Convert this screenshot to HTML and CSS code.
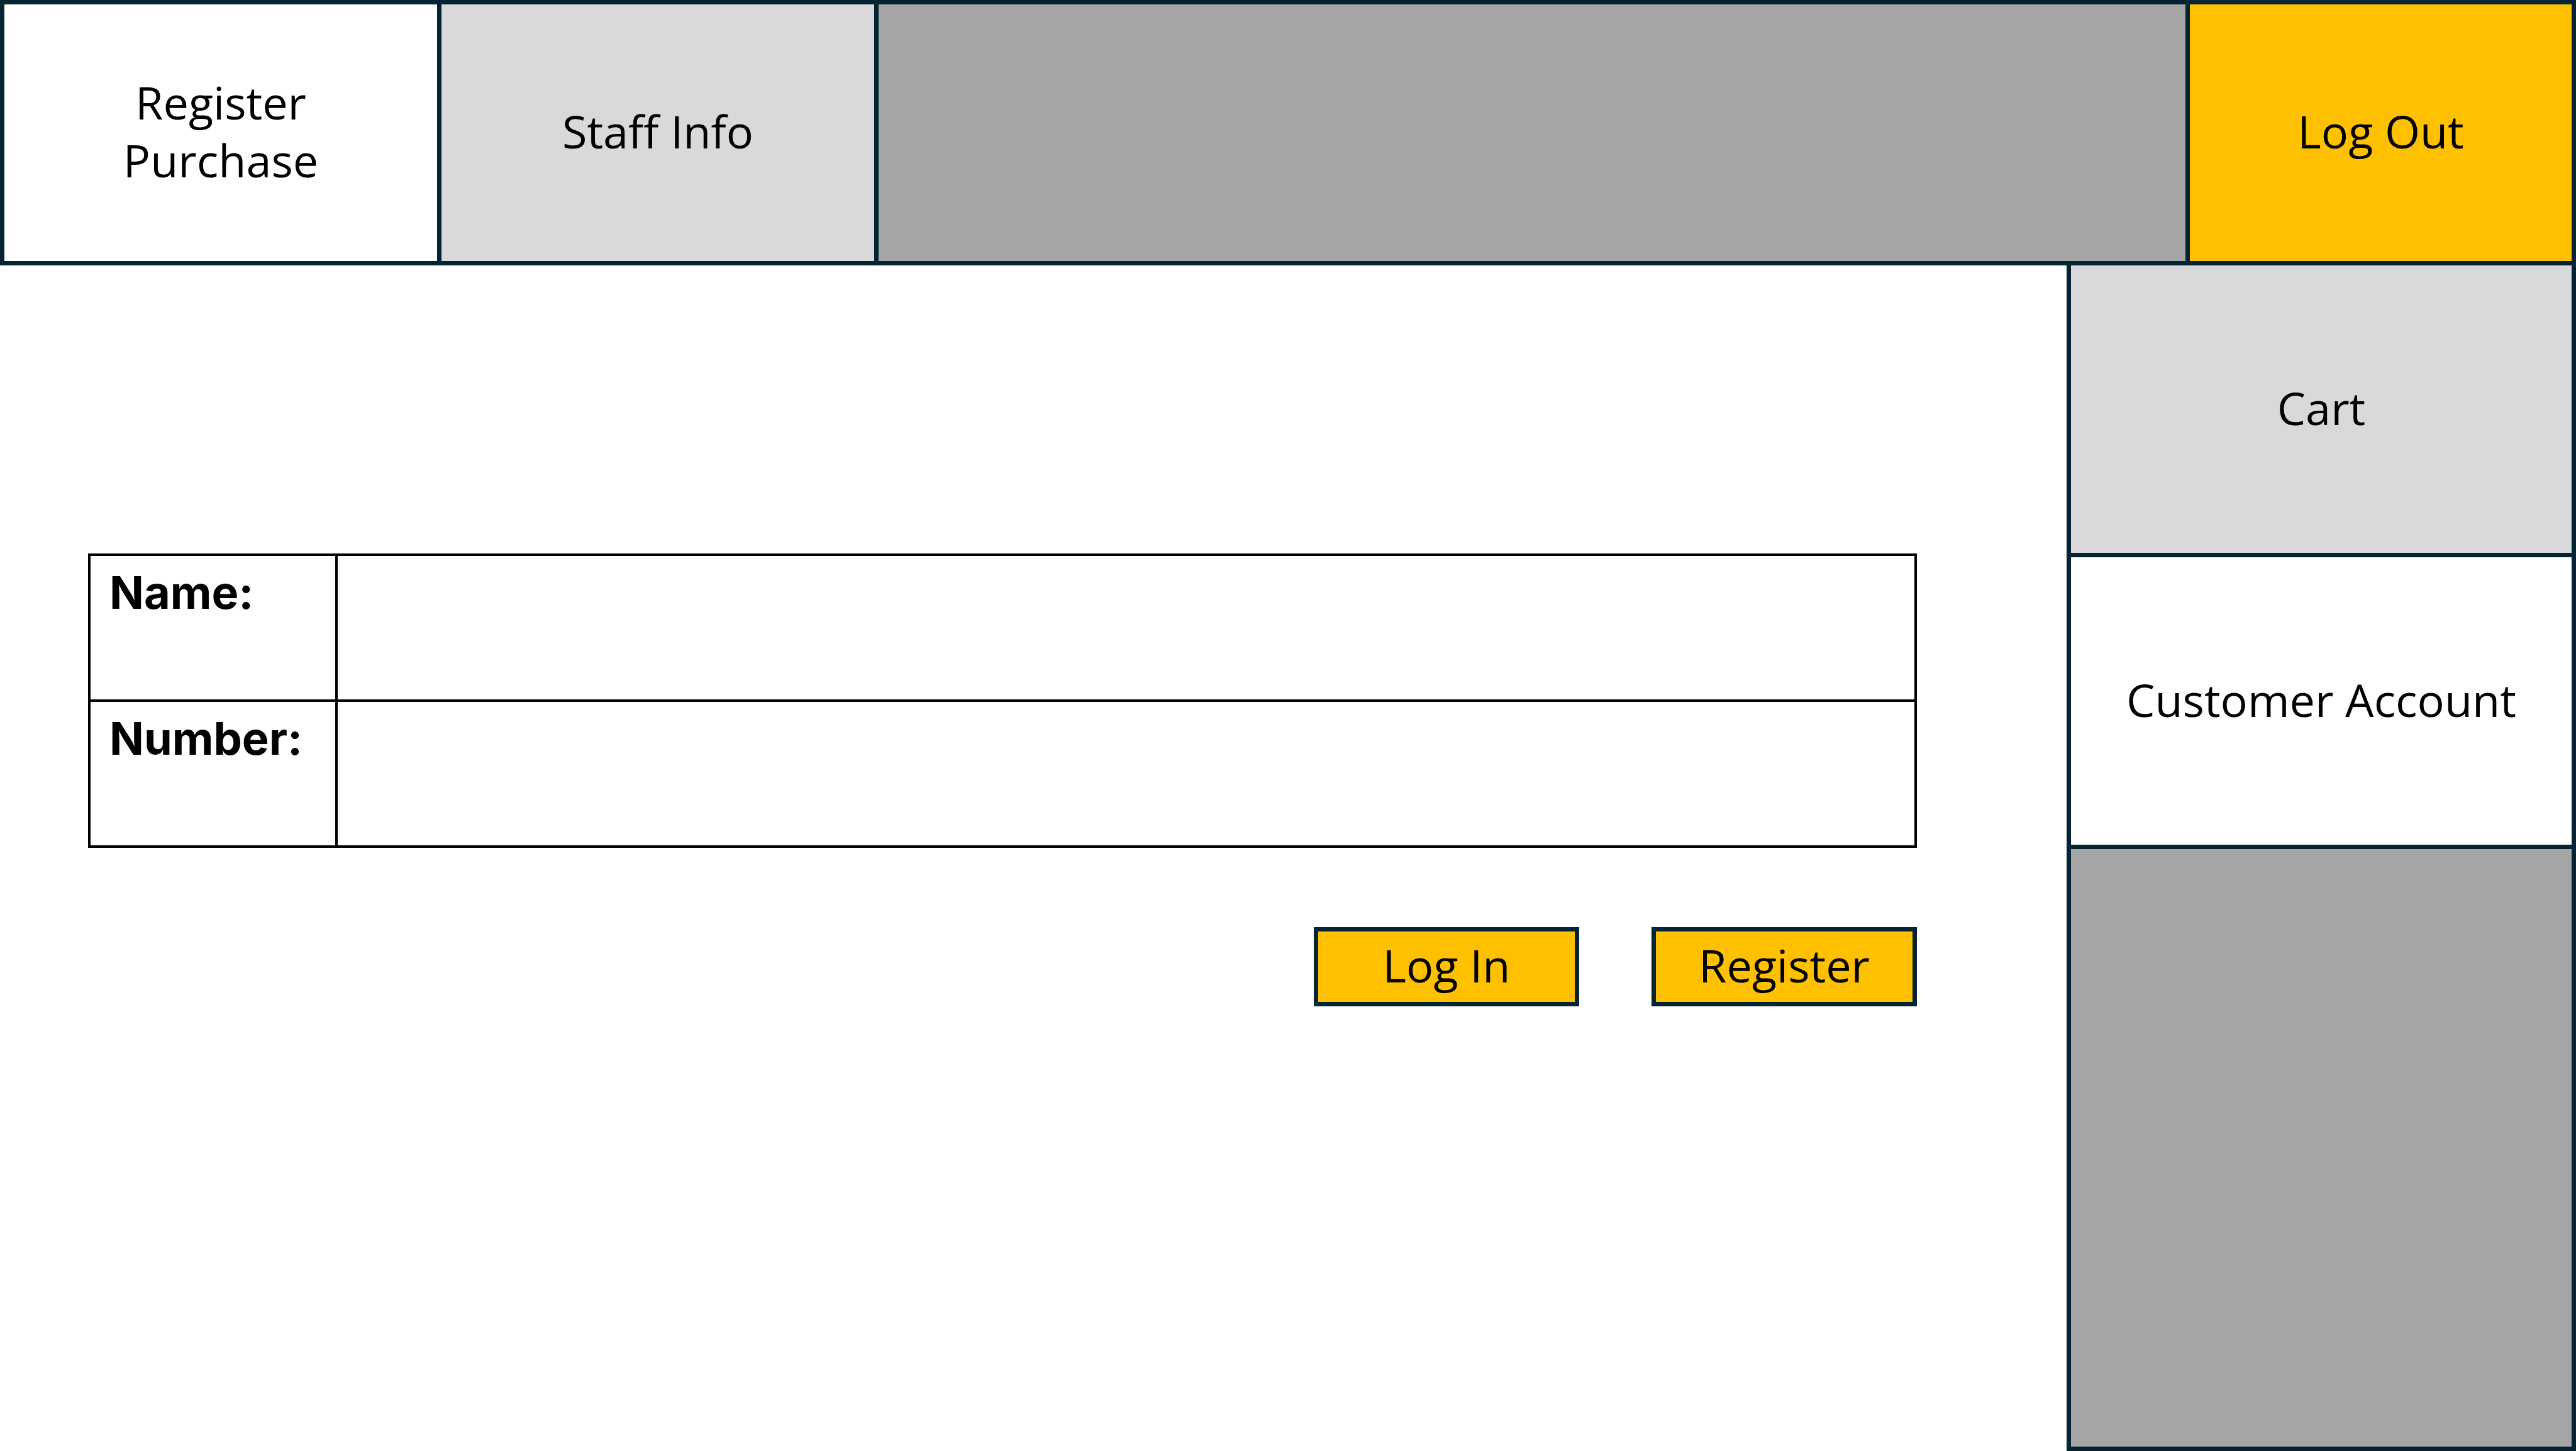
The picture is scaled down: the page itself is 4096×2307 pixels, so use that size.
FILE: index.html
```html
<!DOCTYPE html>
<html lang="en">
<head>
<meta charset="utf-8">
<title>Customer Account</title>
<link rel="stylesheet" href="styles.css">
</head>
<body>
<div class="page">
  <header class="topbar">
    <button class="tile tile-current" type="button">Register Purchase</button>
    <button class="tile" type="button">Staff Info</button>
    <div class="filler"></div>
    <button class="tile tile-action" type="button">Log Out</button>
  </header>
  <main class="content">
    <form class="account">
      <div class="fields">
        <label class="field-label" for="name">Name:</label>
        <input class="field-input" id="name" type="text">
        <label class="field-label" for="number">Number:</label>
        <input class="field-input" id="number" type="text">
      </div>
      <div class="actions">
        <button class="action" type="button">Log In</button>
        <button class="action" type="button">Register</button>
      </div>
    </form>
  </main>
  <nav class="sidebar">
    <button class="tile" type="button">Cart</button>
    <button class="tile tile-current" type="button">Customer Account</button>
    <div class="filler"></div>
  </nav>
</div>
</body>
</html>
```
FILE: styles.css
```css
:root {
  --line: #042433;
  --amber: #ffc000;
  --light: #d9d9d9;
  --mid: #a6a6a6;
}

* {
  box-sizing: border-box;
}

body {
  margin: 0;
  background: #fff;
  color: #000;
  font: 72px/92px "Open Sans", sans-serif;
}

button,
input {
  font: inherit;
  color: inherit;
  margin: 0;
  border: 0;
  border-radius: 0;
}

.page {
  display: grid;
  grid-template-columns: 1fr 810px;
  grid-template-rows: auto 1fr;
  min-height: 100vh;
}

/* The dark background shows through the gaps as divider lines. */
.topbar {
  grid-column: 1 / -1;
  display: grid;
  grid-template-columns: 688px 688px 1fr 607px;
  grid-auto-rows: minmax(408px, auto);
  gap: 7px;
  padding: 7px;
  background: var(--line);
}

.sidebar {
  display: grid;
  grid-template-rows: 457px 457px 1fr;
  gap: 7px;
  padding: 0 7px 7px;
  background: var(--line);
}

.tile {
  padding: 0 80px 6px;
  background: var(--light);
}

.tile-current {
  background: #fff;
}

.tile-action {
  background: var(--amber);
}

.filler {
  background: var(--mid);
}

.content {
  padding: 458px 238px 80px 140px;
}

.fields {
  display: grid;
  grid-template-columns: 389px 1fr;
  grid-auto-rows: 228px;
  gap: 4px;
  padding: 4px;
  background: #000;
}

.field-label {
  padding: 12px 30px;
  background: #fff;
  font-family: "Inter", sans-serif;
  font-weight: 700;
}

.field-input {
  width: 100%;
  padding: 12px 30px;
  background: #fff;
}

.actions {
  display: flex;
  justify-content: flex-end;
  gap: 115px;
  margin-top: 126px;
}

.action {
  width: 422px;
  height: 126px;
  padding: 0 0 6px;
  border: 7px solid var(--line);
  background: var(--amber);
}
```
